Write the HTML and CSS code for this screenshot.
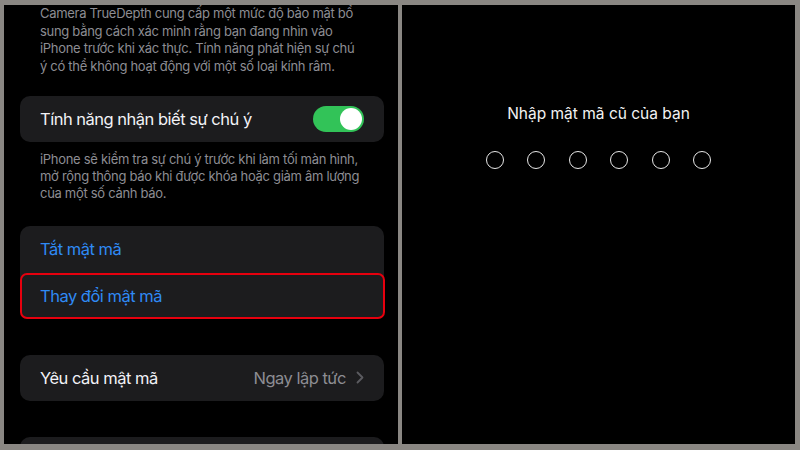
FILE: index.html
```html
<!DOCTYPE html>
<html lang="vi">
<head>
<meta charset="utf-8">
<title>Mật mã</title>
<link rel="stylesheet" href="styles.css">
</head>
<body>
<div class="frame">
  <section class="panel settings">
    <p class="footnote first">Camera TrueDepth cung cấp một mức độ bảo mật bổ sung bằng cách xác minh rằng bạn đang nhìn vào iPhone trước khi xác thực. Tính năng phát hiện sự chú ý có thể không hoạt động với một số loại kính râm.</p>
    <div class="card">
      <div class="row">
        <span class="label">Tính năng nhận biết sự chú ý</span>
        <span class="toggle"><span class="knob"></span></span>
      </div>
    </div>
    <p class="footnote second">iPhone sẽ kiểm tra sự chú ý trước khi làm tối màn hình, mở rộng thông báo khi được khóa hoặc giảm âm lượng của một số cảnh báo.</p>
    <div class="card group">
      <div class="row link top">Tắt mật mã</div>
      <div class="row link highlighted">Thay đổi mật mã</div>
    </div>
    <div class="card spaced">
      <div class="row">
        <span class="label">Yêu cầu mật mã</span>
        <span class="value">Ngay lập tức
          <svg class="chev" width="8" height="13" viewBox="0 0 8 13"><path d="M1.5 1.5 L6.5 6.5 L1.5 11.5" fill="none" stroke="#5b5b60" stroke-width="1.8" stroke-linecap="round" stroke-linejoin="round"/></svg>
        </span>
      </div>
    </div>
    <div class="card spaced stub"></div>
  </section>
  <section class="panel passcode">
    <h1 class="prompt">Nhập mật mã cũ của bạn</h1>
    <div class="dots">
      <span class="dot"></span><span class="dot"></span><span class="dot"></span>
      <span class="dot"></span><span class="dot"></span><span class="dot"></span>
    </div>
  </section>
</div>
</body>
</html>
```
FILE: styles.css
```css
html, body {
  margin: 0;
  padding: 0;
  background: #8a8783;
}
body {
  font-family: Inter, "Noto Sans", "Liberation Sans", sans-serif;
  -webkit-font-smoothing: antialiased;
}
.frame {
  width: 800px;
  height: 450px;
  box-sizing: border-box;
  padding: 5px 5px 6px 4px;
  display: flex;
  gap: 4px;
}
.panel {
  background: #000;
  overflow: hidden;
}
.settings {
  width: 394px;
  flex: none;
  box-sizing: border-box;
  padding: 0 14px 0 16px;
}
.footnote {
  margin: 0;
  padding: 0 20px 0 20px;
  color: #8d8d93;
  font-size: 13px;
  letter-spacing: -0.3px;
  line-height: 17.6px;
}
.footnote.first {
  margin-bottom: 21px;
}
.footnote.second {
  margin-top: 9px;
  margin-bottom: 24px;
  line-height: 16.8px;
}
.card {
  background: #1c1c1e;
  border-radius: 10px;
}
.card.spaced {
  margin-top: 36px;
}
.row {
  height: 46px;
  display: flex;
  align-items: center;
  justify-content: space-between;
  padding: 0 20px;
  font-size: 16.5px;
  letter-spacing: -0.5px;
  color: #f2f2f7;
  box-sizing: border-box;
}
.row.top {
  height: 47px;
}
.link {
  color: #2f8af5;
}
.highlighted {
  height: 46px;
  border: 2px solid #e6000e;
  border-radius: 7px;
  margin-right: -1px;
  padding-left: 18px;
}
.toggle {
  width: 51px;
  height: 26px;
  border-radius: 13px;
  background: #32c358;
  position: relative;
  flex: none;
}
.knob {
  position: absolute;
  right: 2px;
  top: 2px;
  width: 22px;
  height: 22px;
  border-radius: 50%;
  background: #fff;
}
.value {
  color: #8d8d93;
  display: flex;
  align-items: center;
  gap: 10px;
}
.chev {
  display: block;
}
.stub {
  height: 30px;
}
.passcode {
  flex: 1;
  display: flex;
  flex-direction: column;
  align-items: center;
}
.prompt {
  margin: 98px 0 0;
  font-size: 15.5px;
  font-weight: 400;
  color: #f2f2f2;
  line-height: 22px;
}
.dots {
  margin-top: 26px;
  display: flex;
  gap: 23.5px;
}
.dot {
  width: 16px;
  height: 16px;
  border: 1.4px solid #e8e8e8;
  border-radius: 50%;
}
```
